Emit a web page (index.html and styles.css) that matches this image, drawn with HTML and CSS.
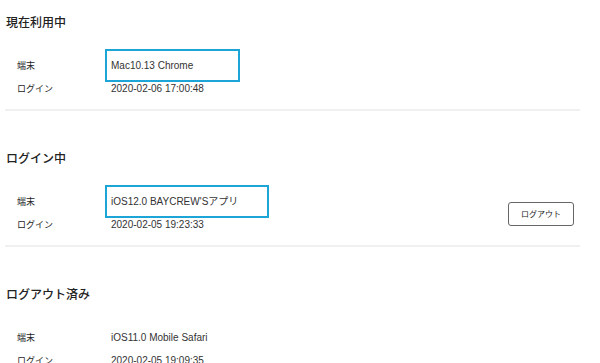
FILE: index.html
```html
<!DOCTYPE html>
<html lang="ja">
<head>
<meta charset="UTF-8">
<meta name="viewport" content="width=device-width, initial-scale=1.0">
<title>ログイン履歴</title>
<link rel="stylesheet" href="styles.css">
</head>
<body>
<main class="sessions">
  <section class="session">
    <h2 class="session-title">現在利用中</h2>
    <div class="session-body">
      <dl class="session-info">
        <div class="info-row">
          <dt>端末</dt>
          <dd><span class="mark mark-short">Mac10.13 Chrome</span></dd>
        </div>
        <div class="info-row">
          <dt>ログイン</dt>
          <dd>2020-02-06 17:00:48</dd>
        </div>
      </dl>
    </div>
  </section>

  <section class="session">
    <h2 class="session-title">ログイン中</h2>
    <div class="session-body">
      <dl class="session-info">
        <div class="info-row">
          <dt>端末</dt>
          <dd><span class="mark mark-long">iOS12.0 BAYCREW'Sアプリ</span></dd>
        </div>
        <div class="info-row">
          <dt>ログイン</dt>
          <dd>2020-02-05 19:23:33</dd>
        </div>
      </dl>
      <button type="button" class="logout">ログアウト</button>
    </div>
  </section>

  <section class="session">
    <h2 class="session-title">ログアウト済み</h2>
    <div class="session-body">
      <dl class="session-info">
        <div class="info-row">
          <dt>端末</dt>
          <dd>iOS11.0 Mobile Safari</dd>
        </div>
        <div class="info-row">
          <dt>ログイン</dt>
          <dd>2020-02-05 19:09:35</dd>
        </div>
      </dl>
    </div>
  </section>
</main>
</body>
</html>
```

FILE: styles.css
```css
body {
  margin: 0;
  background: #fff;
  color: #333;
  font-family: "Liberation Sans", "Noto Sans CJK JP", sans-serif;
}
.sessions {
  margin: 0 20px 0 5px;
  padding-top: 14px;
  height: 363px;
  overflow: hidden;
}
.session {
  border-bottom: 2px solid #f0f0f0;
  padding-bottom: 9px;
  margin-bottom: 39px;
}
.session-title {
  margin: 0 0 24px 1px;
  font-size: 12px;
  line-height: 16px;
  font-weight: 500;
  color: #222;
  font-family: "Noto Sans CJK JP", sans-serif;
}
.session-body {
  display: flex;
  align-items: center;
  justify-content: space-between;
  padding: 0 6px 0 12px;
}
.session-info {
  margin: 0;
}
.info-row {
  display: flex;
  align-items: center;
  height: 23px;
}
.info-row dt {
  width: 94px;
  font-size: 9px;
  font-family: "Noto Sans CJK JP", sans-serif;
  color: #222;
}
.info-row dd {
  margin: 0;
  font-size: 10px;
  line-height: 14px;
  color: #333;
}
.mark {
  display: block;
  box-sizing: border-box;
  border: 2px solid #1ea5d8;
  padding: 8px 4px 7px;
  margin: -10px 0 -9px -6px;
}
.mark-short {
  width: 135px;
}
.mark-long {
  width: 164px;
}
.logout {
  width: 66px;
  height: 24px;
  padding: 0;
  margin-top: 1px;
  background: #fff;
  border: 1px solid #666;
  border-radius: 3px;
  font-size: 8px;
  font-family: "Noto Sans CJK JP", sans-serif;
  color: #222;
}
```
